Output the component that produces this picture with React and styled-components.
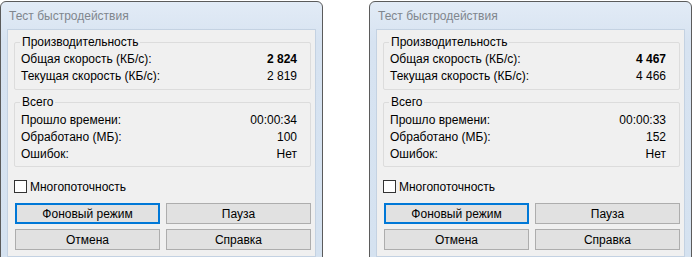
import React from "react";
import styled, { createGlobalStyle } from "styled-components";

const GlobalStyle = createGlobalStyle`
  body {
    margin: 0;
    background: #fff;
    overflow: hidden;
    font-family: "Liberation Sans", Arial, sans-serif;
  }
`;

const Page = styled.div`
  display: flex;
  gap: 46px;
  padding-top: 1px;
`;

const Window = styled.div`
  width: 323px;
  box-sizing: border-box;
  border: 1px solid #5b5b5b;
  border-radius: 6px 6px 0 0;
  background: linear-gradient(#e2ebf6, #d7e3f1 40px, #d5e2f0);
  padding: 0 6px 6px;
`;

const TitleBar = styled.div`
  height: 26px;
  padding: 1px 0 0 2px;
  font-size: 12px;
  line-height: 26px;
  color: #80868d;
`;

const Content = styled.div`
  background: #f0f0f0;
  border: 1px solid #c4d2e2;
  padding: 5px 4px 6px 6px;
`;

const Group = styled.fieldset`
  margin: ${(p) => (p.$first ? "0" : "5px 0 0")};
  min-width: 0;
  border: 1px solid #dcdcdc;
  border-radius: 2px;
  padding: ${(p) => (p.$first ? "1px 13px 4px 5px" : "2px 13px 3px 5px")};
`;

const Legend = styled.legend`
  padding: 0 2px;
  font-size: 12px;
  line-height: 15px;
  color: #000;
`;

const Row = styled.div`
  display: flex;
  justify-content: space-between;
  padding-left: 1px;
  font-size: 12px;
  line-height: 17px;
  color: #000;
`;

const Value = styled.span`
  font-weight: ${(p) => (p.$bold ? 700 : 400)};
`;

const CheckRow = styled.label`
  display: flex;
  align-items: center;
  height: 17px;
  margin-top: 11px;
  font-size: 12px;
  color: #000;
`;

const Box = styled.span`
  width: 13px;
  height: 13px;
  box-sizing: border-box;
  border: 1px solid #333;
  background: #fff;
  margin-right: 3px;
`;

const Buttons = styled.div`
  display: grid;
  grid-template-columns: 145px 145px;
  grid-auto-rows: 21px;
  gap: 5px 6px;
  margin: 8px 0 0 1px;
`;

const Button = styled.button`
  box-sizing: border-box;
  margin: 0;
  padding: 0;
  font-family: inherit;
  font-size: 12px;
  color: #000;
  background: #e1e1e1;
  border: ${(p) => (p.$focused ? "2px solid #0078d7" : "1px solid #adadad")};
`;

const data = [
  { total: "2 824", current: "2 819", time: "00:00:34", mb: "100" },
  { total: "4 467", current: "4 466", time: "00:00:33", mb: "152" },
];

const Dialog = ({ d }) => (
  <Window>
    <TitleBar>Тест быстродействия</TitleBar>
    <Content>
      <Group $first>
        <Legend>Производительность</Legend>
        <Row>
          <span>Общая скорость (КБ/с):</span>
          <Value $bold>{d.total}</Value>
        </Row>
        <Row>
          <span>Текущая скорость (КБ/с):</span>
          <Value>{d.current}</Value>
        </Row>
      </Group>
      <Group>
        <Legend>Всего</Legend>
        <Row>
          <span>Прошло времени:</span>
          <Value>{d.time}</Value>
        </Row>
        <Row>
          <span>Обработано (МБ):</span>
          <Value>{d.mb}</Value>
        </Row>
        <Row>
          <span>Ошибок:</span>
          <Value>Нет</Value>
        </Row>
      </Group>
      <CheckRow>
        <Box />
        Многопоточность
      </CheckRow>
      <Buttons>
        <Button $focused>Фоновый режим</Button>
        <Button>Пауза</Button>
        <Button>Отмена</Button>
        <Button>Справка</Button>
      </Buttons>
    </Content>
  </Window>
);

export default function App() {
  return (
    <>
      <GlobalStyle />
      <Page>
        {data.map((d) => (
          <Dialog key={d.time} d={d} />
        ))}
      </Page>
    </>
  );
}
